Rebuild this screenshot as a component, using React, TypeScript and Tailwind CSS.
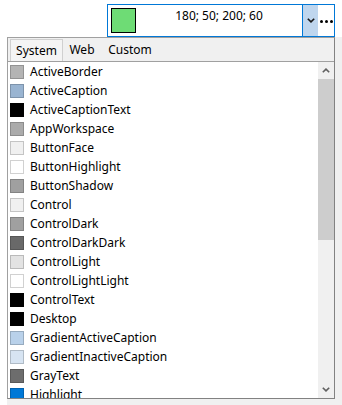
import React from 'react';

type SysColor = { name: string; hex: string };

const systemColors: SysColor[] = [
  { name: 'ActiveBorder', hex: '#b4b4b4' },
  { name: 'ActiveCaption', hex: '#99b4d1' },
  { name: 'ActiveCaptionText', hex: '#000000' },
  { name: 'AppWorkspace', hex: '#ababab' },
  { name: 'ButtonFace', hex: '#f0f0f0' },
  { name: 'ButtonHighlight', hex: '#ffffff' },
  { name: 'ButtonShadow', hex: '#a0a0a0' },
  { name: 'Control', hex: '#f0f0f0' },
  { name: 'ControlDark', hex: '#a0a0a0' },
  { name: 'ControlDarkDark', hex: '#696969' },
  { name: 'ControlLight', hex: '#e3e3e3' },
  { name: 'ControlLightLight', hex: '#ffffff' },
  { name: 'ControlText', hex: '#000000' },
  { name: 'Desktop', hex: '#000000' },
  { name: 'GradientActiveCaption', hex: '#b9d1ea' },
  { name: 'GradientInactiveCaption', hex: '#d7e4f2' },
  { name: 'GrayText', hex: '#6d6d6d' },
  { name: 'Highlight', hex: '#0078d7' },
  { name: 'HighlightText', hex: '#ffffff' },
  { name: 'HotTrack', hex: '#0066cc' },
  { name: 'InactiveBorder', hex: '#f4f7fc' },
];

const Chevron: React.FC<{ up?: boolean; className?: string }> = ({ up, className }) => (
  <svg width="8" height="5" viewBox="0 0 8 5" className={className}>
    <polyline
      points={up ? '0.8,4.3 4,1.1 7.2,4.3' : '0.8,0.7 4,3.9 7.2,0.7'}
      fill="none"
      stroke="currentColor"
      strokeWidth="1.6"
    />
  </svg>
);

const ColorRow: React.FC<{ color: SysColor }> = ({ color }) => (
  <div className="flex h-[19px] shrink-0 items-center">
    {/* fill is set from data */}
    <span
      className="ml-[2px] h-[14px] w-[14px] shrink-0 border border-[rgba(0,0,0,0.18)]"
      style={{ backgroundColor: color.hex }}
    />
    <span className="ml-[6px] whitespace-nowrap text-[12px] leading-none text-black">{color.name}</span>
  </div>
);

export default function App() {
  return (
    <div className="h-[405px] w-[342px] overflow-hidden bg-white font-['Noto_Sans',sans-serif] text-[12px] text-black">
      {/* color editor box */}
      <div className="flex h-[37px] justify-end pr-[7px] pt-[4px]">
        <div className="flex h-[33px] w-[228px] border border-[#0078d7] bg-white">
          <span className="ml-[3px] h-[25px] w-[25px] shrink-0 self-center border border-black bg-[#6edc75]" />
          <div className="flex-1 pt-[3px] text-center leading-[16px]">180; 50; 200; 60</div>
          <div className="flex w-[16px] items-center justify-center border-l border-[#0078d7] bg-[#bfd6ee] text-[#1a1a1a]">
            <Chevron />
          </div>
          <div className="flex w-[16px] items-center justify-center gap-[2px] pt-[1px]">
            <span className="h-[3px] w-[3px] rounded-full bg-black" />
            <span className="h-[3px] w-[3px] rounded-full bg-black" />
            <span className="h-[3px] w-[3px] rounded-full bg-black" />
          </div>
        </div>
      </div>

      {/* dropdown panel */}
      <div className="ml-[7px] h-[368px] bg-[#f0f0f0]">
        <div className="flex h-[362px] w-[328px] flex-col border border-l-[#a0a0a0] border-t-[#a0a0a0] border-r-[#828282] border-b-[#828282]">
          <div className="flex h-[24px] shrink-0 items-end border-b border-[#a0a0a0] pl-[2px]">
            <div className="flex h-[22px] w-[53px] items-center justify-center border border-b-0 border-[#d0d0d0] bg-[#f4f4f4]">
              System
            </div>
            <div className="flex h-[22px] w-[38px] items-center justify-center">Web</div>
            <div className="flex h-[22px] w-[58px] items-center justify-center">Custom</div>
          </div>
          <div className="flex min-h-0 flex-1">
            <div className="flex min-w-0 flex-1 flex-col overflow-hidden bg-white">
              {systemColors.map((c) => (
                <ColorRow key={c.name} color={c} />
              ))}
            </div>
            <div className="flex w-[16px] shrink-0 flex-col bg-[#f0f0f0] text-[#606060]">
              <div className="flex h-[17px] items-center justify-center">
                <Chevron up />
              </div>
              <div className="h-[161px] bg-[#cdcdcd]" />
              <div className="flex-1" />
              <div className="flex h-[17px] items-center justify-center">
                <Chevron />
              </div>
            </div>
          </div>
        </div>
      </div>
    </div>
  );
}
